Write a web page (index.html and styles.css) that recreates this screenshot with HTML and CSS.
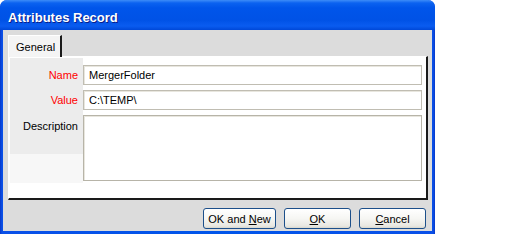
FILE: index.html
```html
<!DOCTYPE html>
<html>
<head>
<meta charset="utf-8">
<link rel="stylesheet" href="styles.css">
</head>
<body>
<div class="window">
  <div class="titlebar"><span class="title">Attributes Record</span></div>
  <div class="client">
    <div class="tabs"><div class="tab">General</div></div>
    <div class="panel">
      <div class="form">
        <div class="row">
          <label class="label required">Name</label>
          <div class="input">MergerFolder</div>
        </div>
        <div class="row">
          <label class="label required">Value</label>
          <div class="input">C:\TEMP\</div>
        </div>
        <div class="row row-desc">
          <label class="label">Description</label>
          <div class="input textarea"></div>
        </div>
      </div>
    </div>
    <div class="buttons">
      <button class="btn btn-wide">OK and <u>N</u>ew</button>
      <button class="btn"><u>O</u>K</button>
      <button class="btn"><u>C</u>ancel</button>
    </div>
  </div>
</div>
</body>
</html>
```

FILE: styles.css
```css
html, body {
  margin: 0;
  padding: 0;
  background: #ffffff;
}
body {
  font-family: "Liberation Sans", Arial, sans-serif;
  font-size: 11px;
  color: #000;
}
.window {
  width: 435px;
  height: 234px;
  box-sizing: border-box;
  display: flex;
  flex-direction: column;
  border-radius: 7px 7px 0 0;
  background: linear-gradient(90deg, #0838c8 0px, #0a50e8 2px, #0055ea 50%, #0a50e8 calc(100% - 2px), #0838c8 100%);
  padding: 0 3px 3px 3px;
}
.titlebar {
  height: 30px;
  margin: 0 -3px;
  border-radius: 7px 7px 0 0;
  background: linear-gradient(180deg, #3d8cf8 0px, #0b62f0 3px, #0055ea 8px, #0052e6 20px, #0a5cf0 26px, #0048d8 30px);
  display: flex;
  align-items: center;
  padding: 0 8px;
  box-sizing: border-box;
}
.title {
  color: #fff;
  font-weight: bold;
  font-size: 13px;
  text-shadow: 1px 1px 0 #0a1e8a;
  margin-top: 4px;
}
.client {
  flex: 1;
  background: #dcdcdc;
  display: flex;
  flex-direction: column;
  padding: 5px 4px 2px 5px;
}
.tabs {
  display: flex;
  height: 21px;
}
.tab {
  width: 54px;
  box-sizing: border-box;
  background: #f4f4f4;
  border-top: 1px solid #fff;
  border-left: 1px solid #fff;
  border-right: 2px solid #1a1a1a;
  padding: 5px 0 0 7px;
  margin-bottom: -1px;
  position: relative;
  z-index: 1;
}
.panel {
  height: 144px;
  box-sizing: border-box;
  background: #ffffff;
  border-left: 1px solid #fff;
  border-top: 1px solid #fff;
  border-right: 2px solid #1a1a1a;
  border-bottom: 2px solid #1a1a1a;
  padding: 1px 2px 0 1px;
}
.form {
  background: linear-gradient(180deg, #ececec 0px, #ececec 96px, #f7f7f7 96px, #f7f7f7 125px);
  background-repeat: no-repeat;
  background-size: 73px 125px;
  padding-top: 7px;
  display: flex;
  flex-direction: column;
  gap: 5px;
  height: 125px;
}
.row {
  display: flex;
  align-items: center;
}
.row-desc {
  align-items: flex-start;
}
.label {
  width: 68px;
  text-align: right;
  padding-right: 5px;
  box-sizing: content-box;
}
.row-desc .label {
  padding-top: 5px;
}
.required {
  color: #ff0000;
}
.input {
  width: 339px;
  height: 20px;
  box-sizing: border-box;
  border: 1px solid #c0bdb2;
  box-shadow: inset 1px 1px 0 #e8e6de;
  background: #fff;
  padding: 3px 4px 0 5px;
}
.textarea {
  height: 66px;
  border-color: #b7b4a8;
}
.buttons {
  display: flex;
  justify-content: flex-end;
  gap: 8px;
  margin-top: 8px;
  padding-right: 2px;
}
.btn {
  width: 67px;
  height: 21px;
  box-sizing: border-box;
  border: 1px solid #1c4f8a;
  border-radius: 3px;
  background: linear-gradient(180deg, #ffffff 0%, #f6f6f3 50%, #e8e7e1 90%, #d8d6cc 100%);
  font-family: "Liberation Sans", Arial, sans-serif;
  font-size: 11px;
  color: #000;
  padding: 0;
}
.btn-wide {
  width: 73px;
}
u {
  text-decoration: underline;
}
```
